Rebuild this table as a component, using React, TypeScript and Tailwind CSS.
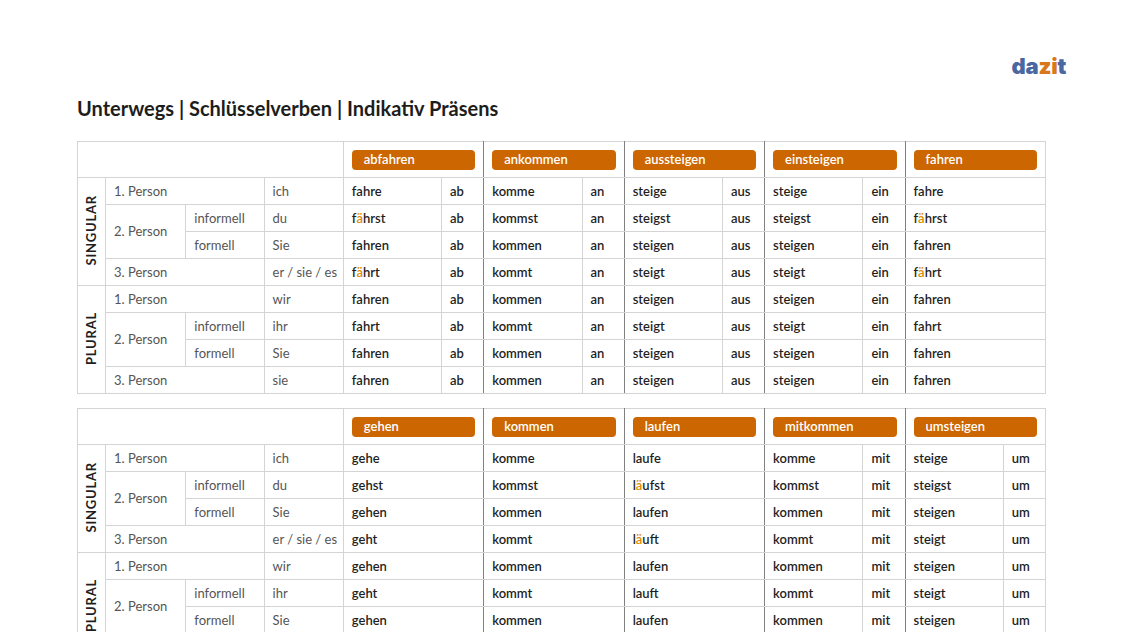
import React from 'react'

type Group = { verb: string; particle?: string; forms: string[] }

const table1: Group[] = [
  { verb: 'abfahren', particle: 'ab', forms: ['fahre', 'f*ä*hrst', 'fahren', 'f*ä*hrt', 'fahren', 'fahrt', 'fahren', 'fahren'] },
  { verb: 'ankommen', particle: 'an', forms: ['komme', 'kommst', 'kommen', 'kommt', 'kommen', 'kommt', 'kommen', 'kommen'] },
  { verb: 'aussteigen', particle: 'aus', forms: ['steige', 'steigst', 'steigen', 'steigt', 'steigen', 'steigt', 'steigen', 'steigen'] },
  { verb: 'einsteigen', particle: 'ein', forms: ['steige', 'steigst', 'steigen', 'steigt', 'steigen', 'steigt', 'steigen', 'steigen'] },
  { verb: 'fahren', forms: ['fahre', 'f*ä*hrst', 'fahren', 'f*ä*hrt', 'fahren', 'fahrt', 'fahren', 'fahren'] },
]

const table2: Group[] = [
  { verb: 'gehen', forms: ['gehe', 'gehst', 'gehen', 'geht', 'gehen', 'geht', 'gehen', 'gehen'] },
  { verb: 'kommen', forms: ['komme', 'kommst', 'kommen', 'kommt', 'kommen', 'kommt', 'kommen', 'kommen'] },
  { verb: 'laufen', forms: ['laufe', 'l*ä*ufst', 'laufen', 'l*ä*uft', 'laufen', 'lauft', 'laufen', 'laufen'] },
  { verb: 'mitkommen', particle: 'mit', forms: ['komme', 'kommst', 'kommen', 'kommt', 'kommen', 'kommt', 'kommen', 'kommen'] },
  { verb: 'umsteigen', particle: 'um', forms: ['steige', 'steigst', 'steigen', 'steigt', 'steigen', 'steigt', 'steigen', 'steigen'] },
]

const pronouns = ['ich', 'du', 'Sie', 'er / sie / es', 'wir', 'ihr', 'Sie', 'sie']

// "f*ä*hrt" -> umlaut in orange
function Form({ text }: { text: string }) {
  const parts = text.split('*')
  return (
    <>
      {parts.map((p, i) =>
        i % 2 === 1 ? (
          <span key={i} className="text-[#e08a00]">
            {p}
          </span>
        ) : (
          <React.Fragment key={i}>{p}</React.Fragment>
        ),
      )}
    </>
  )
}

const cell = 'border border-[#d4d4d4] pl-2 pr-1 h-[27px] text-left align-middle whitespace-nowrap'
const label = `${cell} text-[#555] font-normal`
const verbCell = `${cell} text-[#1f1f1f] font-semibold`
const dark = 'border-r-[#808080]'

function GroupCells({ groups, row }: { groups: Group[]; row: number }) {
  return (
    <>
      {groups.map((g, gi) => {
        const last = gi < groups.length - 1 ? dark : ''
        return g.particle ? (
          <React.Fragment key={gi}>
            <td className={verbCell}>
              <Form text={g.forms[row]} />
            </td>
            <td className={`${verbCell} ${last}`}>{g.particle}</td>
          </React.Fragment>
        ) : (
          <td key={gi} colSpan={2} className={`${verbCell} ${last}`}>
            <Form text={g.forms[row]} />
          </td>
        )
      })}
    </>
  )
}

function Side({ text, rows }: { text: string; rows: number }) {
  return (
    <td rowSpan={rows} className="border border-[#d4d4d4] text-center align-middle">
      <span className="inline-block rotate-180 [writing-mode:vertical-rl] font-bold text-[13px] tracking-[0.06em] text-[#1f1f1f]">
        {text}
      </span>
    </td>
  )
}

function Conjugation({ groups }: { groups: Group[] }) {
  const rows = (start: number, side: string) => (
    <>
      <tr>
        <Side text={side} rows={4} />
        <td colSpan={2} className={label}>
          1. Person
        </td>
        <td className={label}>{pronouns[start]}</td>
        <GroupCells groups={groups} row={start} />
      </tr>
      <tr>
        <td rowSpan={2} className={label}>
          2. Person
        </td>
        <td className={label}>informell</td>
        <td className={label}>{pronouns[start + 1]}</td>
        <GroupCells groups={groups} row={start + 1} />
      </tr>
      <tr>
        <td className={label}>formell</td>
        <td className={label}>{pronouns[start + 2]}</td>
        <GroupCells groups={groups} row={start + 2} />
      </tr>
      <tr>
        <td colSpan={2} className={label}>
          3. Person
        </td>
        <td className={label}>{pronouns[start + 3]}</td>
        <GroupCells groups={groups} row={start + 3} />
      </tr>
    </>
  )

  return (
    <table className="table-fixed border-collapse w-[969px] text-[13px] leading-none">
      <colgroup>
        <col className="w-[28px]" />
        <col className="w-[80px]" />
        <col className="w-[78px]" />
        <col className="w-[79px]" />
        {groups.map((_, i) => (
          <React.Fragment key={i}>
            <col className="w-[98px]" />
            <col className="w-[42px]" />
          </React.Fragment>
        ))}
      </colgroup>
      <tbody>
        <tr>
          <td colSpan={4} className="border border-[#d4d4d4] h-[36px]" />
          {groups.map((g, gi) => (
            <td
              key={gi}
              colSpan={2}
              className={`border border-[#d4d4d4] h-[36px] px-2 align-middle ${gi < groups.length - 1 ? dark : ''}`}
            >
              <div className="h-[20px] rounded-[4px] bg-[#cc6600] px-3 flex items-center text-white font-semibold text-[13px]">
                {g.verb}
              </div>
            </td>
          ))}
        </tr>
        {rows(0, 'SINGULAR')}
        {rows(4, 'PLURAL')}
      </tbody>
    </table>
  )
}

export default function App() {
  return (
    <div className="w-[1123px] h-[632px] overflow-hidden bg-white font-['Lato',sans-serif]">
      <div className="flex justify-end pr-[57px] pt-[55px]">
        <div className="font-['Inter',sans-serif] text-[22px] font-black leading-none tracking-[-0.01em]">
          <span className="text-[#4a68a0]">da</span>
          <span className="text-[#d8781c]">zi</span>
          <span className="text-[#4a68a0]">t</span>
        </div>
      </div>
      <div className="pl-[77px] pt-[21px]">
        <h1 className="text-[20px] font-bold text-[#1d1d1b] leading-none">
          Unterwegs | Schlüsselverben | Indikativ Präsens
        </h1>
        <div className="mt-[23px] flex flex-col gap-[14px]">
          <Conjugation groups={table1} />
          <Conjugation groups={table2} />
        </div>
      </div>
    </div>
  )
}
